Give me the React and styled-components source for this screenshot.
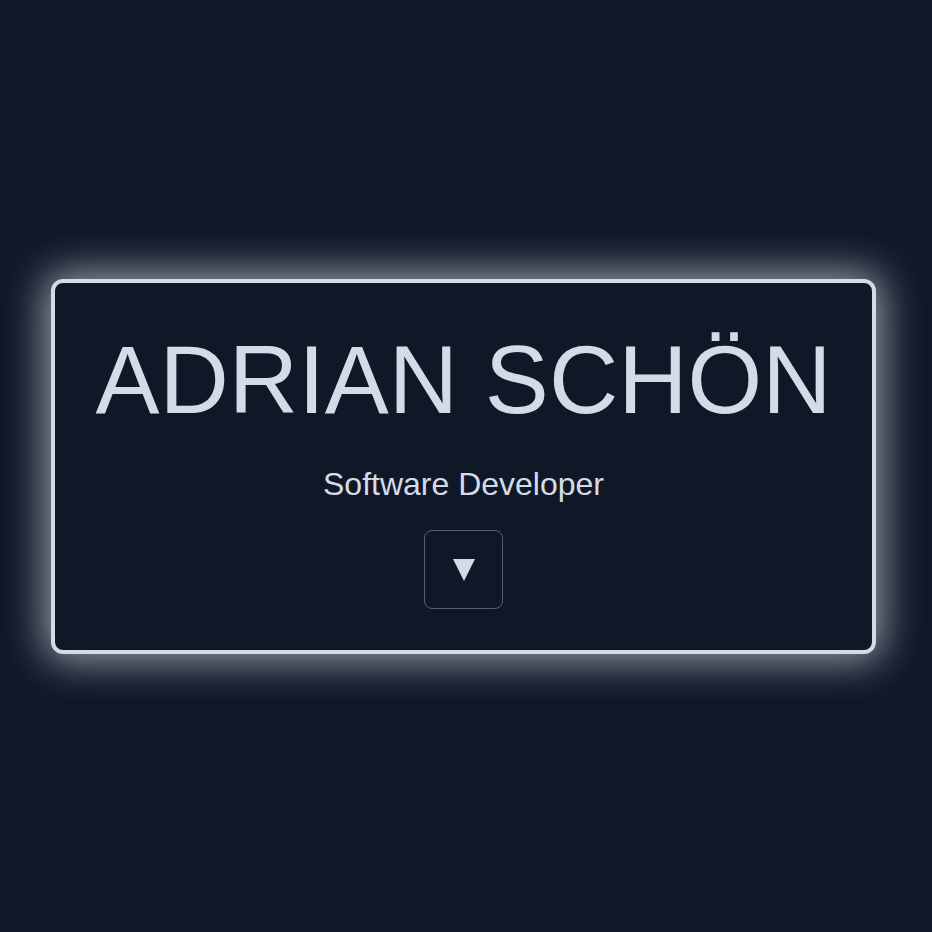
import React from "react";
import styled, { createGlobalStyle } from "styled-components";

const Global = createGlobalStyle`
  html, body {
    margin: 0;
    padding: 0;
    background: #101828;
  }
  body {
    font-family: "Liberation Sans", Arial, sans-serif;
  }
`;

const Page = styled.main`
  box-sizing: border-box;
  width: 100%;
  height: 932px;
  display: flex;
  align-items: center;
  justify-content: center;
  padding-right: 5px;
  background: #101828;
`;

const Card = styled.section`
  box-sizing: border-box;
  width: 825px;
  display: flex;
  flex-direction: column;
  align-items: center;
  padding: 49px 0 41px;
  background: #101828;
  border: 4px solid #d4dbe6;
  border-radius: 12px;
  box-shadow: 0 0 40px 6px rgba(212, 219, 230, 0.7);
`;

const Title = styled.h1`
  margin: 0 0 40px;
  font-size: 96px;
  line-height: 96px;
  font-weight: 400;
  color: #d4dbe6;
  white-space: nowrap;
`;

const Subtitle = styled.p`
  margin: 0 0 30px;
  font-size: 32px;
  line-height: 32px;
  color: #d4dbe6;
`;

const ScrollButton = styled.button`
  box-sizing: border-box;
  width: 79px;
  height: 79px;
  display: flex;
  align-items: center;
  justify-content: center;
  padding: 2px 0 0;
  background: transparent;
  border: 1px solid #556070;
  border-radius: 8px;
  cursor: pointer;
`;

export default function App() {
  return (
    <>
      <Global />
      <Page>
        <Card>
          <Title>ADRIAN SCHÖN</Title>
          <Subtitle>Software Developer</Subtitle>
          <ScrollButton aria-label="Scroll down">
            <svg width="22" height="22" viewBox="0 0 22 22">
              <polygon points="0,0 22,0 11,22" fill="#d4dbe6" />
            </svg>
          </ScrollButton>
        </Card>
      </Page>
    </>
  );
}
